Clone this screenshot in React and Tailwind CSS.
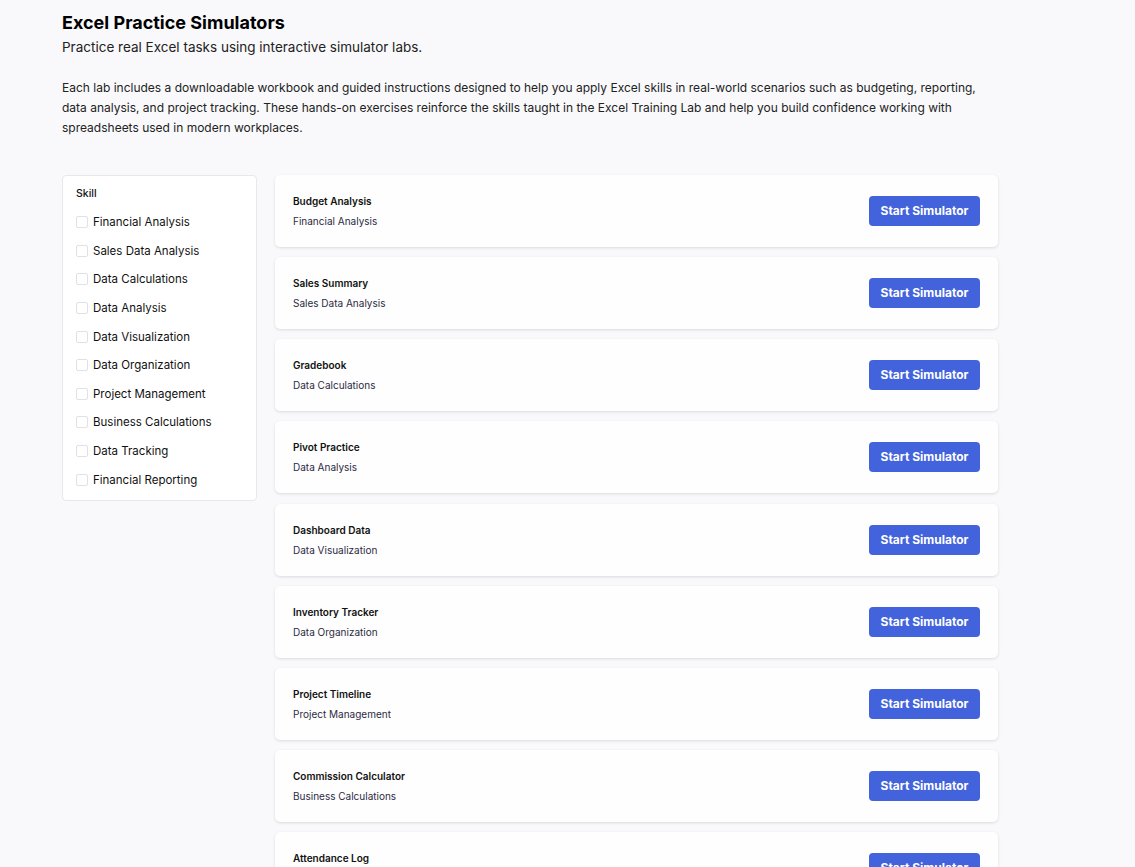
import React from "react";

const skills = [
  "Financial Analysis",
  "Sales Data Analysis",
  "Data Calculations",
  "Data Analysis",
  "Data Visualization",
  "Data Organization",
  "Project Management",
  "Business Calculations",
  "Data Tracking",
  "Financial Reporting",
];

const labs = [
  ["Budget Analysis", "Financial Analysis"],
  ["Sales Summary", "Sales Data Analysis"],
  ["Gradebook", "Data Calculations"],
  ["Pivot Practice", "Data Analysis"],
  ["Dashboard Data", "Data Visualization"],
  ["Inventory Tracker", "Data Organization"],
  ["Project Timeline", "Project Management"],
  ["Commission Calculator", "Business Calculations"],
  ["Attendance Log", "Data Tracking"],
  ["Financial Report", "Financial Reporting"],
];

export default function App() {
  return (
    <div
      className="min-h-screen bg-[#f9f9fb] text-[#111111]"
      style={{ fontFamily: "Inter, 'Noto Sans', sans-serif" }}
    >
      <div className="w-[936px] ml-[62px] pt-[11px] pb-10">
        <h1 className="text-[18px] font-bold leading-[24px] text-black">Excel Practice Simulators</h1>
        <p className="text-[13.5px] leading-[22px] mt-[1px] text-[#222]">
          Practice real Excel tasks using interactive simulator labs.
        </p>
        <p className="text-[12px] leading-[20px] mt-[20px] text-[#222]">
          Each lab includes a downloadable workbook and guided instructions designed to help you apply Excel skills in real-world scenarios such as budgeting, reporting, data analysis, and project tracking. These hands-on exercises reinforce the skills taught in the Excel Training Lab and help you build confidence working with spreadsheets used in modern workplaces.
        </p>

        <div className="flex items-start gap-[18px] mt-[37px]">
          <aside className="w-[195px] shrink-0 bg-white border border-[#e7e8ec] rounded-[4px] px-[13px] pt-[10px] pb-[7px]">
            <div className="text-[10.5px] font-medium leading-[16px] text-[#111]">Skill</div>
            <div className="mt-[5px] flex flex-col">
              {skills.map((s) => (
                <label key={s} className="flex items-center h-[28.6px] gap-[5px] pt-[2px]">
                  <span className="w-[12px] h-[12px] border border-[#dfe1e6] rounded-[2px] bg-white shrink-0" />
                  <span className="text-[11.5px] text-[#111] leading-[16px]">{s}</span>
                </label>
              ))}
            </div>
          </aside>

          <div className="flex-1 flex flex-col gap-[10.15px]">
            {labs.map(([t, s]) => (
              <div
                key={t}
                className="h-[72px] bg-[#fdfefd] rounded-[5px] shadow-[0_1px_3px_rgba(0,0,0,0.12)] flex items-center justify-between pl-[18px] pr-[18px]"
              >
                <div className="flex flex-col">
                  <div className="text-[10px] font-semibold leading-[16px] text-[#111]">{t}</div>
                  <div className="text-[10px] leading-[16px] mt-[4px] text-[#2d2a45]">{s}</div>
                </div>
                <button className="h-[30px] w-[111px] rounded-[4px] bg-[#4263db] text-white text-[12px] font-bold">
                  Start Simulator
                </button>
              </div>
            ))}
          </div>
        </div>
      </div>
    </div>
  );
}
